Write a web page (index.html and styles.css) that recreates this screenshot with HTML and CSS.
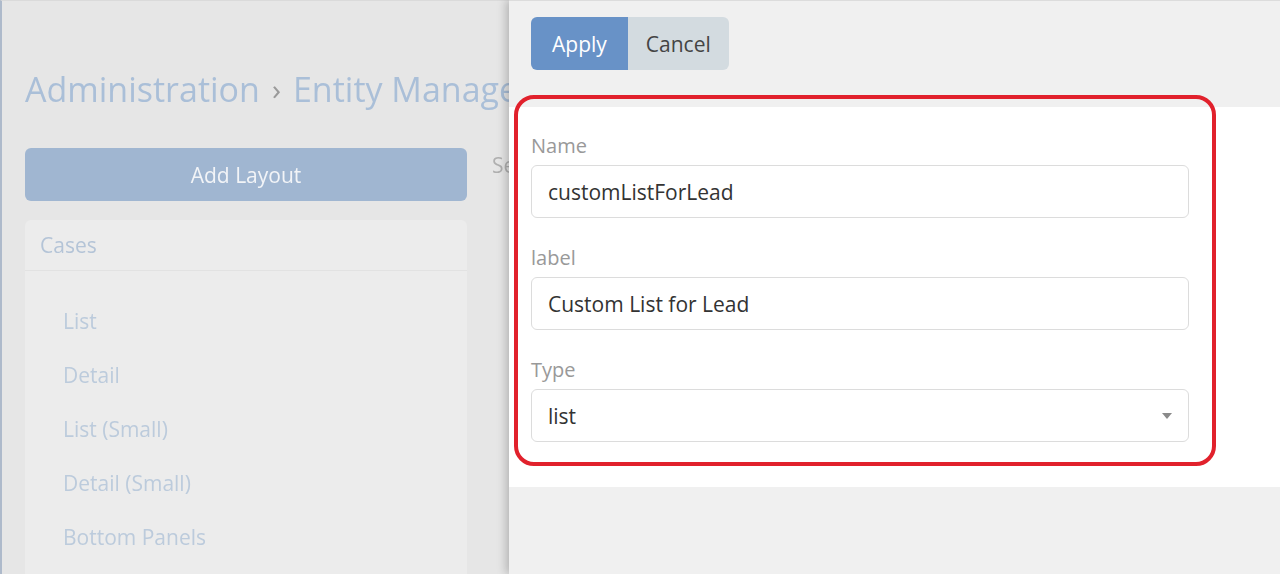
FILE: index.html
```html
<!DOCTYPE html>
<html lang="en">
<head>
<meta charset="utf-8">
<title>Add Layout</title>
<link rel="stylesheet" href="styles.css">
</head>
<body>
<div class="page">
  <div class="backdrop">
    <h1 class="crumbs"><span>Administration</span><span class="sep">›</span><span>Entity Manage</span></h1>
    <div class="row">
      <div class="side">
        <button class="add-btn" type="button">Add Layout</button>
        <div class="card">
          <div class="card-head">Cases</div>
          <ul class="items">
            <li>List</li>
            <li>Detail</li>
            <li>List (Small)</li>
            <li>Detail (Small)</li>
            <li>Bottom Panels</li>
          </ul>
        </div>
      </div>
      <div class="main">Se</div>
    </div>
  </div>

  <div class="modal">
    <div class="modal-head">
      <div class="btn-group">
        <button class="btn btn-primary" type="button">Apply</button>
        <button class="btn btn-default" type="button">Cancel</button>
      </div>
    </div>
    <div class="modal-body">
      <form class="form">
        <div class="field">
          <label class="label">Name</label>
          <div class="control">customListForLead</div>
        </div>
        <div class="field">
          <label class="label">label</label>
          <div class="control">Custom List for Lead</div>
        </div>
        <div class="field">
          <label class="label">Type</label>
          <div class="control select"><span>list</span><span class="caret"></span></div>
        </div>
      </form>
    </div>
  </div>

  <div class="annotation"></div>
</div>
</body>
</html>
```

FILE: styles.css
```css
* { box-sizing: border-box; }
html, body {
  margin: 0;
  padding: 0;
  height: 574px;
  overflow: hidden;
}
body {
  font-family: "Open Sans", "Liberation Sans", sans-serif;
  background: #e6e6e6;
}
.page {
  position: relative;
  width: 1280px;
  height: 574px;
  border-left: 2px solid #aebacb;
  border-top: 1px solid #dadada;
  background: #e6e6e6;
}
.backdrop {
  padding: 68px 0 0 23px;
  filter: blur(0.7px);
}
.crumbs {
  margin: 0;
  font-weight: 400;
  font-size: 34px;
  line-height: 40px;
  color: #aabfd8;
  white-space: nowrap;
  display: flex;
  gap: 12px;
}
.crumbs .sep {
  color: #9a9a9a;
  font-size: 30px;
}
.row {
  display: flex;
  gap: 25px;
  margin-top: 39px;
}
.side {
  width: 442px;
  display: flex;
  flex-direction: column;
  gap: 19px;
}
.add-btn {
  height: 53px;
  border: 0;
  border-radius: 6px;
  background: #a0b6d1;
  color: #f2f4f7;
  font-family: inherit;
  font-size: 21px;
}
.card {
  background: #ececec;
  border-radius: 6px;
  height: 360px;
}
.card-head {
  height: 51px;
  padding: 0 15px;
  display: flex;
  align-items: center;
  font-size: 21px;
  color: #b4c4d7;
  border-bottom: 1px solid #e2e2e2;
}
.items {
  list-style: none;
  margin: 0;
  padding: 23px 0 0 38px;
}
.items li {
  height: 54px;
  line-height: 54px;
  font-size: 21px;
  color: #bccbdc;
}
.main {
  padding-top: 3px;
  font-size: 21px;
  color: #b0b0b0;
  white-space: nowrap;
}

.modal {
  position: absolute;
  top: -1px;
  left: 507px;
  right: 0;
  bottom: 0;
  background: #f0f0f0;
  border-top: 1px solid #dcdcdc;
  box-shadow: -3px 0 9px rgba(0, 0, 0, 0.22);
}
.modal-head {
  height: 106px;
  padding: 16px 22px 0;
}
.btn-group {
  display: inline-flex;
}
.btn {
  height: 53px;
  border: 0;
  font-family: inherit;
  font-size: 21px;
  cursor: pointer;
}
.btn-primary {
  background: #6892c7;
  color: #fff;
  padding: 0 21px;
  border-radius: 6px 0 0 6px;
}
.btn-default {
  background: #d3dbe0;
  color: #444;
  padding: 0 18px;
  border-radius: 0 6px 6px 0;
}
.modal-body {
  background: #fff;
  padding: 26px 91px 45px 22px;
}
.form {
  display: flex;
  flex-direction: column;
  gap: 27px;
}
.field {
  display: flex;
  flex-direction: column;
  gap: 6px;
}
.label {
  font-size: 20px;
  line-height: 26px;
  color: #999;
}
.control {
  height: 53px;
  border: 1px solid #dcdcdc;
  border-radius: 6px;
  background: #fff;
  padding: 0 16px;
  display: flex;
  align-items: center;
  justify-content: space-between;
  font-size: 21px;
  color: #333;
}
.caret {
  width: 0;
  height: 0;
  border-left: 5px solid transparent;
  border-right: 5px solid transparent;
  border-top: 6px solid #8a8a8a;
}

.annotation {
  position: absolute;
  left: 512px;
  top: 94px;
  width: 702px;
  height: 371px;
  border: 4px solid #e1212c;
  border-radius: 20px;
  pointer-events: none;
}
```
